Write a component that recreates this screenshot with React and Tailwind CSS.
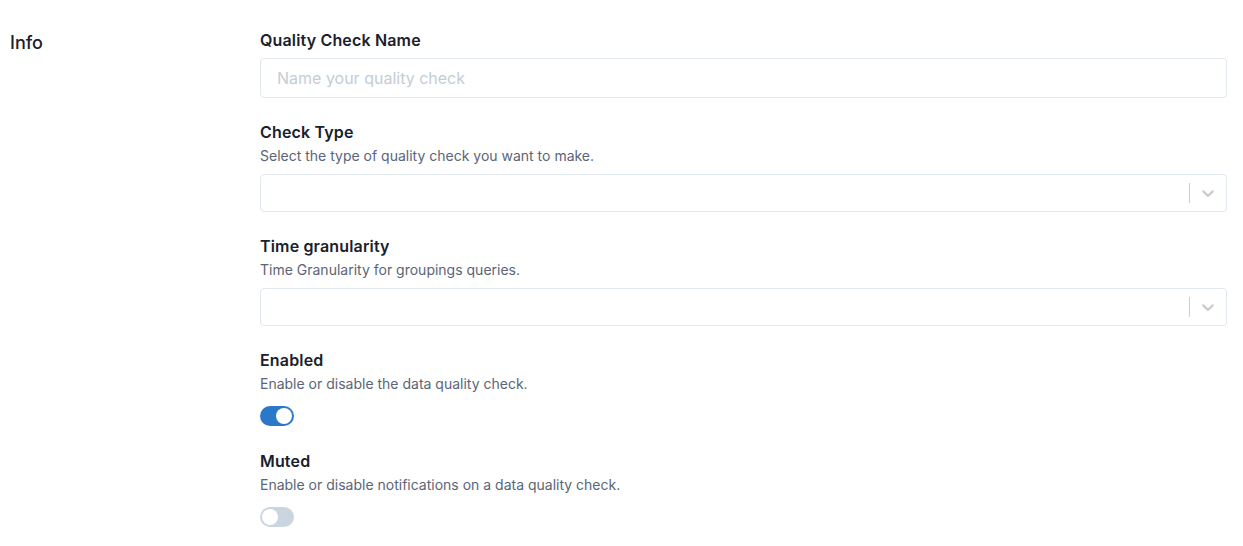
import React from 'react';

const font = { fontFamily: 'Inter, "Noto Sans", sans-serif' };

/**
 * Field label + optional helper text
 */
const FieldHeader = ({ label, help }) => (
  <div className="mb-2">
    <div className="text-[16px] leading-5 font-semibold tracking-[0.01em] text-[#1a202c]">{label}</div>
    {help && <div className="mt-1 text-[14px] leading-5 text-[#5a6577]">{help}</div>}
  </div>
);

/**
 * Empty select box with react-select style indicators
 */
const SelectBox = () => (
  <div className="h-[38px] w-full rounded-[4px] border border-[#e2e8f0] bg-white flex items-center justify-end">
    <span className="w-px h-5 bg-[#cccccc]" />
    <span className="px-2 flex items-center text-[#cccccc]">
      <svg width="20" height="20" viewBox="0 0 20 20" fill="currentColor">
        <path d="M4.516 7.548c0.436-0.446 1.043-0.481 1.576 0l3.908 3.747 3.908-3.747c0.533-0.481 1.141-0.446 1.574 0 0.436 0.445 0.408 1.197 0 1.615-0.406 0.418-4.695 4.502-4.695 4.502-0.217 0.223-0.502 0.335-0.787 0.335s-0.57-0.112-0.789-0.335c0 0-4.287-4.084-4.695-4.502s-0.436-1.17 0-1.615z" />
      </svg>
    </span>
  </div>
);

const Toggle = ({ on }) => (
  <div className={`w-[34px] h-5 rounded-full p-[2px] flex ${on ? 'bg-[#2b78c8] justify-end' : 'bg-[#cbd5e0] justify-start'}`}>
    <span className="w-4 h-4 rounded-full bg-white" />
  </div>
);

export default function App() {
  return (
    <div className="w-[1243px] h-[546px] bg-white flex" style={font}>
      <div className="w-[260px] pl-[10px] pt-[33px] shrink-0">
        <div className="text-[18px] leading-5 font-medium text-[#1a202c]">Info</div>
      </div>
      <div className="flex-1 pr-4 pt-[30px]">
        <FieldHeader label="Quality Check Name" />
        <input
          className="h-10 w-full rounded-[4px] border border-[#e2e8f0] px-4 text-base text-[#1a202c] placeholder:text-[#c5ccd6] outline-none"
          placeholder="Name your quality check"
        />

        <div className="mt-6">
          <FieldHeader label="Check Type" help="Select the type of quality check you want to make." />
          <SelectBox />
        </div>

        <div className="mt-6">
          <FieldHeader label="Time granularity" help="Time Granularity for groupings queries." />
          <SelectBox />
        </div>

        <div className="mt-6">
          <FieldHeader label="Enabled" help="Enable or disable the data quality check." />
          <div className="pt-1">
            <Toggle on />
          </div>
        </div>

        <div className="mt-[25px]">
          <FieldHeader label="Muted" help="Enable or disable notifications on a data quality check." />
          <div className="pt-1">
            <Toggle />
          </div>
        </div>
      </div>
    </div>
  );
}
